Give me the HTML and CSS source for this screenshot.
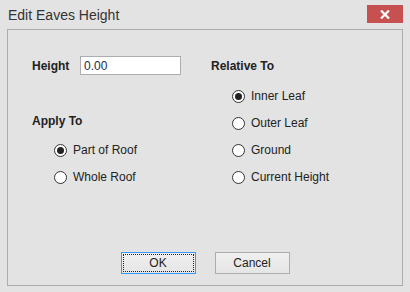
FILE: index.html
```html
<!DOCTYPE html>
<html lang="en">
<head>
  <meta charset="UTF-8" />
  <title>Edit Eaves Height</title>
  <link rel="stylesheet" href="styles.css">
</head>
<body>
  <div class="titlebar">
    <span class="title">Edit Eaves Height</span>
    <button class="close-btn" aria-label="Close">
      <svg width="10" height="9" viewBox="0 0 10 9">
        <path d="M1 0.5 L9 8.5 M9 0.5 L1 8.5" stroke="#fff" stroke-width="2.2"/>
      </svg>
    </button>
  </div>

  <div class="panel">
    <div class="columns">
      <div class="col col-left">
        <div class="field-row">
          <label class="label" for="height">Height</label>
          <input id="height" class="text-input" type="text" value="0.00">
        </div>
        <div class="label group-title apply-title">Apply To</div>
        <div class="radio-list">
          <label class="radio checked"><span class="dot"></span>Part of Roof</label>
          <label class="radio"><span class="dot"></span>Whole Roof</label>
        </div>
      </div>

      <div class="col col-right">
        <div class="label group-title relative-title">Relative To</div>
        <div class="radio-list">
          <label class="radio checked"><span class="dot"></span>Inner Leaf</label>
          <label class="radio"><span class="dot"></span>Outer Leaf</label>
          <label class="radio"><span class="dot"></span>Ground</label>
          <label class="radio"><span class="dot"></span>Current Height</label>
        </div>
      </div>
    </div>

    <div class="buttons">
      <button class="btn btn-default"><span class="focus">OK</span></button>
      <button class="btn">Cancel</button>
    </div>
  </div>
</body>
</html>
```

FILE: styles.css
```css
* {
  box-sizing: border-box;
}

body {
  margin: 0;
  width: 410px;
  height: 292px;
  background: #e3e3e3;
  font-family: "Liberation Sans", Arial, sans-serif;
  font-size: 12px;
  color: #222;
  overflow: hidden;
}

.titlebar {
  height: 29px;
  display: flex;
  align-items: flex-start;
  justify-content: space-between;
  padding: 0 7px 0 8px;
}

.title {
  font-size: 14px;
  color: #333;
  line-height: 16px;
  margin-top: 7px;
}

.close-btn {
  width: 36px;
  height: 18px;
  margin-top: 5px;
  border: none;
  padding: 0;
  background: #c75050;
  display: flex;
  align-items: center;
  justify-content: center;
}

.panel {
  margin: 0 7px;
  height: 257px;
  border: 1px solid #adadad;
  display: flex;
  flex-direction: column;
}

.columns {
  display: grid;
  grid-template-columns: 179px 1fr;
  padding: 26px 0 0 24px;
}

.label {
  font-weight: bold;
  line-height: 16px;
}

.field-row {
  display: flex;
  align-items: center;
  height: 19px;
}

.field-row .label {
  width: 48px;
}

.text-input {
  width: 101px;
  height: 19px;
  border: 1px solid #abadb3;
  background: #fff;
  font: inherit;
  color: #1e2c4a;
  padding: 0 3px;
  outline: none;
}

.apply-title {
  margin-top: 38px;
}

.relative-title {
  margin-top: 2px;
}

.radio-list {
  display: flex;
  flex-direction: column;
  gap: 11px;
  padding-left: 22px;
}

.col-left .radio-list {
  margin-top: 13px;
}

.col-right .radio-list {
  margin-top: 14px;
  padding-left: 21px;
}

.radio {
  display: flex;
  align-items: center;
  height: 16px;
  line-height: 16px;
}

.dot {
  flex: none;
  width: 13px;
  height: 13px;
  border: 1px solid #333;
  border-radius: 50%;
  background: #fff;
  margin-right: 6px;
  display: flex;
  align-items: center;
  justify-content: center;
}

.radio.checked .dot::after {
  content: "";
  width: 7px;
  height: 7px;
  border-radius: 50%;
  background: #222;
}

.buttons {
  margin-top: auto;
  margin-bottom: 11px;
  display: flex;
  justify-content: center;
  gap: 19px;
}

.btn {
  width: 75px;
  height: 22px;
  border: 1px solid #adadad;
  background: linear-gradient(#f0f0f0, #e5e5e5);
  font: inherit;
  color: #222;
  padding: 0;
}

.btn-default {
  border-color: #3399ff;
  padding: 1px;
}

.focus {
  display: flex;
  align-items: center;
  justify-content: center;
  height: 100%;
  border: 1px dotted #222;
}
```
